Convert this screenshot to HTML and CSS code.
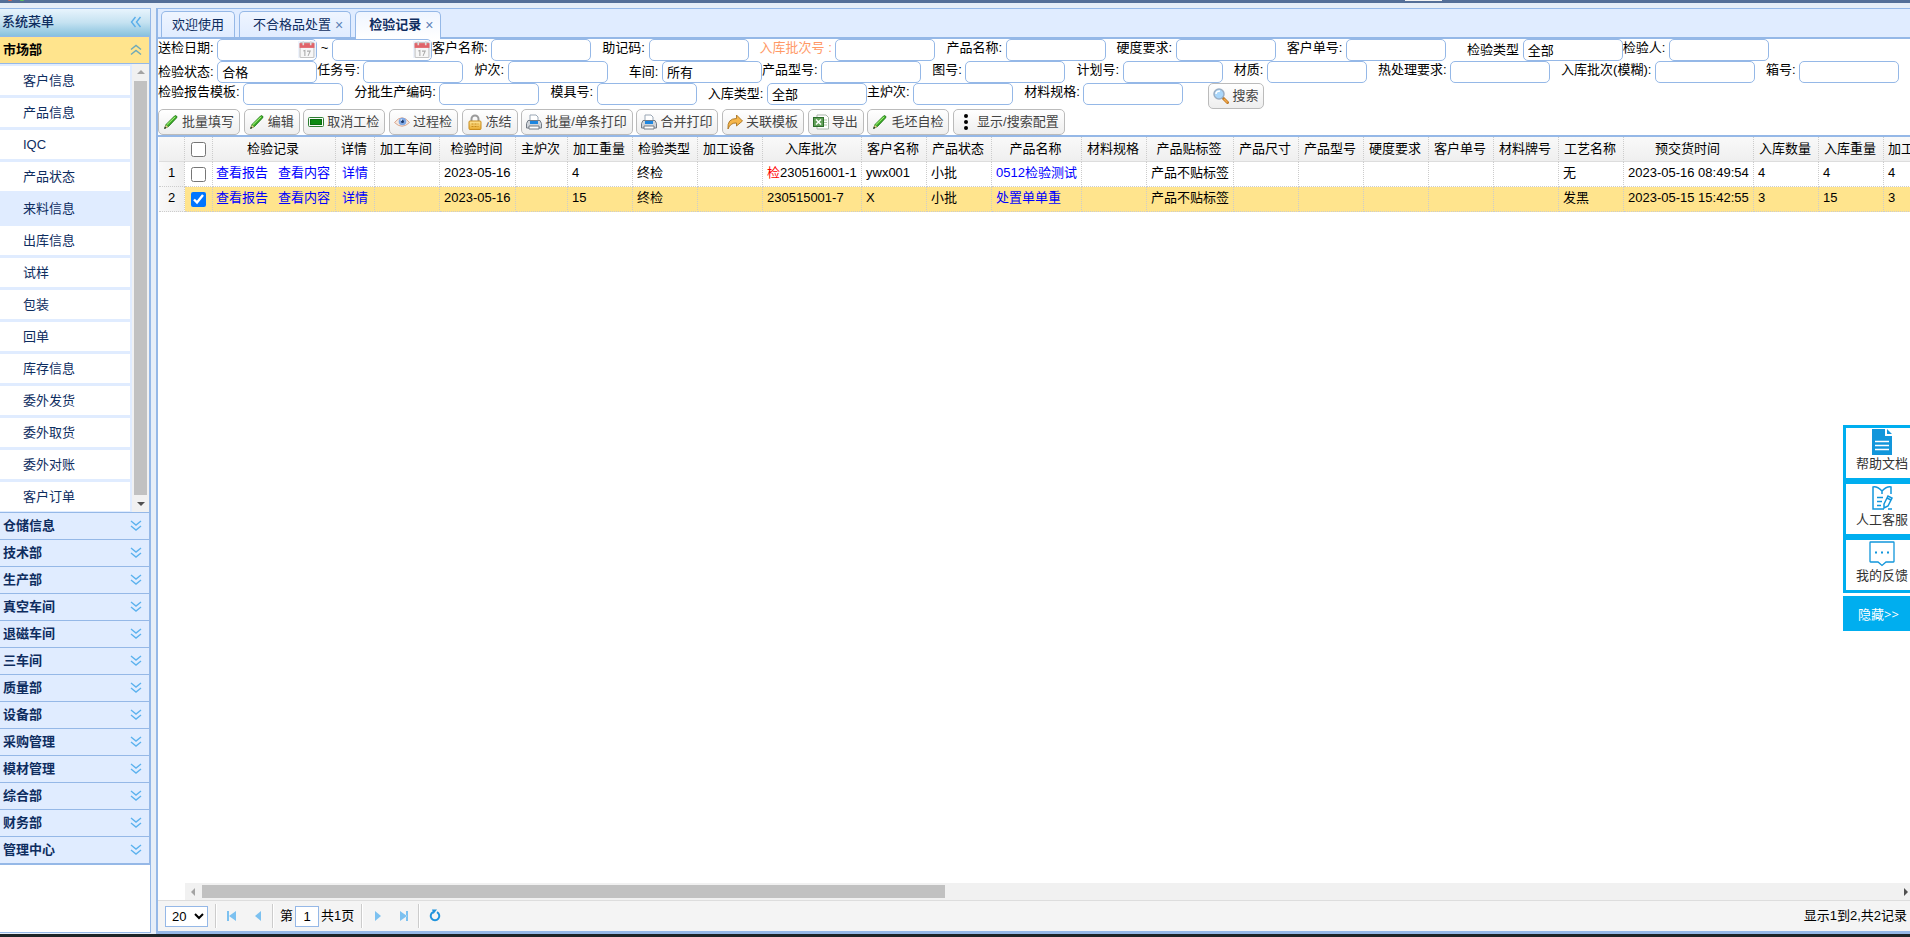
FILE: index.html
```
<!DOCTYPE html>
<html lang="zh-CN">
<head>
<meta charset="utf-8">
<title>检验记录</title>
<link rel="stylesheet" href="styles.css">
</head>
<body>
<svg class="defs" aria-hidden="true">
  <defs>
    <linearGradient id="g-pencil" x1="0" y1="0" x2="1" y2="1"><stop offset="0.3" stop-color="#7be34c"/><stop offset="0.7" stop-color="#14850f"/></linearGradient>
    <linearGradient id="g-gold" x1="0" y1="0" x2="0" y2="1"><stop offset="0" stop-color="#ffe79a"/><stop offset="1" stop-color="#e8a92c"/></linearGradient>
  </defs>
  <symbol id="pencil" viewBox="0 0 16 16"><path d="M1.500 14.500l1.500-4L11.500 2q1-1 2 0t0 2L5.500 12.500z" fill="url(#g-pencil)" stroke="#17700f" stroke-width="0.800"/><path d="M4 10.500L12 3" stroke="#a6f27f"/><path d="M1.500 14.500l1.400-3.600 2.200 2.200z" fill="#e8cf8f"/><path d="M1.300 14.700l.7-2.200 1.500 1.500z" fill="#222"/></symbol>
  <symbol id="card" viewBox="0 0 16 16"><rect x="0.500" y="3.500" width="15" height="9" rx="1" fill="#f4fbf4" stroke="#2e7d32"/><rect x="2.500" y="5.500" width="11" height="5" fill="#0c8a12" stroke="#0a6b10"/></symbol>
  <symbol id="eye" viewBox="0 0 16 16"><path d="M0.500 8.500Q8-1 15.500 8.500 8 16 .5 8.500z" fill="#f5e8df" stroke="#dba890"/><circle cx="8.500" cy="7.500" r="3.800" fill="#7fa8e4"/><circle cx="8.500" cy="7.500" r="1.500" fill="#1b376b"/><circle cx="7.300" cy="6" r="0.800" fill="#fff"/></symbol>
  <symbol id="lock" viewBox="0 0 16 16"><path d="M4.500 8V5a3.500 3.500 0 017 0v3" fill="none" stroke="#999" stroke-width="2"/><rect x="2" y="7" width="12" height="8.500" rx="1" fill="url(#g-gold)" stroke="#c98c1c"/><path d="M4.500 10h7M4.500 12.500h7" stroke="#c98c1c" stroke-dasharray="2 1"/></symbol>
  <symbol id="printer" viewBox="0 0 16 16"><path d="M4 7V1h6l2 2v4z" fill="#fff" stroke="#9aa7b5"/><path d="M2 6.500h12l1.500 3V14H.5V9.500z" fill="#cfd4da" stroke="#747c86"/><path d="M4 7h8v3H4z" fill="#1d86e0"/><path d="M3 12h10v3H3z" fill="#fff" stroke="#747c86"/></symbol>
  <symbol id="arrow" viewBox="0 0 16 16"><path d="M1 15Q0 4.500 9.500 4.500V1L15.500 7l-6 5V9Q3.500 8.500 1 15z" fill="#f6b64a" stroke="#a87422" stroke-width="0.900"/></symbol>
  <symbol id="excel" viewBox="0 0 16 16"><path d="M4 1h9l2.500 2.500V15H4z" fill="#fff" stroke="#a9b5a9"/><path d="M11 6h3M11 8.500h3M11 11h3" stroke="#a9c7a4"/><rect x="0.500" y="3.500" width="10" height="9" fill="#5f9f57" stroke="#2d6d2a"/><path d="M3 5.500l5 5M8 5.500l-5 5" stroke="#fff" stroke-width="1.500"/></symbol>
  <symbol id="dots" viewBox="0 0 16 16"><circle cx="8" cy="2" r="2"/><circle cx="8" cy="8" r="2"/><circle cx="8" cy="14" r="2"/></symbol>
  <symbol id="search" viewBox="0 0 16 16"><path d="M9.500 9.500l5 5" stroke="#c07a25" stroke-width="3" stroke-linecap="round"/><path d="M11 11l3.500 3.500" stroke="#f3a94c" stroke-width="1.500"/><circle cx="6" cy="6" r="5" fill="#a9d6fa" stroke="#9aaec4" stroke-width="1.500"/><path d="M3 6q0-3 4-3" stroke="#fff" stroke-width="1.500" fill="none"/></symbol>
  <symbol id="calendar" viewBox="0 0 16 16"><rect x="1.500" y="1.500" width="13" height="14" rx="1" fill="#f7f7f7" stroke="#c4c4c4"/><path d="M1 2h14v4.500H1z" fill="#e0646a"/><path d="M4.500 0v4M11.500 0v4" stroke="#ddd" stroke-width="1.500"/><path d="M4.500 9.500l1.500-.5v5M8 9.500h3l-2 4.500" stroke="#aaa" fill="none"/></symbol>
  <symbol id="chev-down" viewBox="0 0 12 12"><path d="M1 1l5 4 5-4M1 6l5 4 5-4" fill="none" stroke="#5cb2ee" stroke-width="1.400"/></symbol>
  <symbol id="chev-up" viewBox="0 0 12 12"><path d="M1 5.500l5-4 5 4M1 10.500l5-4 5 4" fill="none" stroke="#6fa9b8" stroke-width="1.400"/></symbol>
  <symbol id="chev-left" viewBox="0 0 12 12"><path d="M5.500 1L1.500 6l4 5M10.500 1L6.500 6l4 5" fill="none" stroke="#5aaeea" stroke-width="1.400"/></symbol>
</svg>
<div class="topbar"><i class="speck red"></i><i class="speck green"></i><i class="topchip"></i></div>
<div class="workspace">
  <aside class="sidebar">
    <div class="side-title"><span>系统菜单</span><svg class="chev"><use href="#chev-left"/></svg></div>
    <nav class="accordion">
      <button class="group open"><span>市场部</span><svg class="chev"><use href="#chev-up"/></svg></button>
      <div class="menu-wrap">
        <div class="menu">
          <a href="#">客户信息</a><a href="#">产品信息</a><a href="#">IQC</a><a href="#">产品状态</a><a href="#" class="hover">来料信息</a><a href="#">出库信息</a><a href="#">试样</a><a href="#">包装</a><a href="#">回单</a><a href="#">库存信息</a><a href="#">委外发货</a><a href="#">委外取货</a><a href="#">委外对账</a><a href="#">客户订单</a>
        </div>
        <div class="vscroll"><i class="tri up"></i><i class="vthumb"></i><i class="tri down"></i></div>
      </div>
      <button class="group"><span>仓储信息</span><svg class="chev"><use href="#chev-down"/></svg></button>
      <button class="group"><span>技术部</span><svg class="chev"><use href="#chev-down"/></svg></button>
      <button class="group"><span>生产部</span><svg class="chev"><use href="#chev-down"/></svg></button>
      <button class="group"><span>真空车间</span><svg class="chev"><use href="#chev-down"/></svg></button>
      <button class="group"><span>退磁车间</span><svg class="chev"><use href="#chev-down"/></svg></button>
      <button class="group"><span>三车间</span><svg class="chev"><use href="#chev-down"/></svg></button>
      <button class="group"><span>质量部</span><svg class="chev"><use href="#chev-down"/></svg></button>
      <button class="group"><span>设备部</span><svg class="chev"><use href="#chev-down"/></svg></button>
      <button class="group"><span>采购管理</span><svg class="chev"><use href="#chev-down"/></svg></button>
      <button class="group"><span>模材管理</span><svg class="chev"><use href="#chev-down"/></svg></button>
      <button class="group"><span>综合部</span><svg class="chev"><use href="#chev-down"/></svg></button>
      <button class="group"><span>财务部</span><svg class="chev"><use href="#chev-down"/></svg></button>
      <button class="group"><span>管理中心</span><svg class="chev"><use href="#chev-down"/></svg></button>
    </nav>
  </aside>
  <main class="main">
    <div class="tabs">
      <button class="tab">欢迎使用</button>
      <button class="tab closable">不合格品处置<span class="close">×</span></button>
      <button class="tab closable active">检验记录<span class="close">×</span></button>
    </div>
    <form class="search-form">
      <div class="row">
        <label class="tight">送检日期: <span class="date"><input type="text"><svg><use href="#calendar"/></svg></span></label>
        <label class="tight"> ~ <span class="date"><input type="text"><svg><use href="#calendar"/></svg></span></label>
        <label class="tight">客户名称: <input type="text"></label>
        <label>助记码: <input type="text"></label>
        <label class="accent">入库批次号 : <input type="text"></label>
        <label>产品名称: <input type="text"></label>
        <label>硬度要求: <input type="text"></label>
        <label>客户单号: <input type="text"></label>
        <label class="combo wide">检验类型 <select><option>全部</option></select></label>
        <label class="tight">检验人: <input type="text"></label>
      </div>
      <div class="row">
        <label class="combo tight">检验状态: <select><option>合格</option></select></label>
        <label class="tight">任务号: <input type="text"></label>
        <label>炉次: <input type="text"></label>
        <label class="combo wide">车间: <select><option>所有</option></select></label>
        <label class="tight">产品型号: <input type="text"></label>
        <label>图号: <input type="text"></label>
        <label>计划号: <input type="text"></label>
        <label>材质: <input type="text"></label>
        <label>热处理要求: <input type="text"></label>
        <label>入库批次(模糊): <input type="text"></label>
        <label>箱号: <input type="text"></label>
      </div>
      <div class="row last">
        <label class="tight">检验报告模板: <input type="text"></label>
        <label>分批生产编码: <input type="text"></label>
        <label>模具号: <input type="text"></label>
        <label class="combo">入库类型: <select><option>全部</option></select></label>
        <label class="tight">主炉次: <input type="text"></label>
        <label>材料规格: <input type="text"></label>
        <button type="button" class="btn find"><svg><use href="#search"/></svg>搜索</button>
      </div>
    </form>
    <div class="toolbar">
      <button class="btn"><svg><use href="#pencil"/></svg>批量填写</button>
      <button class="btn"><svg><use href="#pencil"/></svg>编辑</button>
      <button class="btn"><svg><use href="#card"/></svg>取消工检</button>
      <button class="btn"><svg><use href="#eye"/></svg>过程检</button>
      <button class="btn"><svg><use href="#lock"/></svg>冻结</button>
      <button class="btn"><svg><use href="#printer"/></svg>批量/单条打印</button>
      <button class="btn"><svg><use href="#printer"/></svg>合并打印</button>
      <button class="btn"><svg><use href="#arrow"/></svg>关联模板</button>
      <button class="btn"><svg><use href="#excel"/></svg>导出</button>
      <button class="btn"><svg><use href="#pencil"/></svg>毛坯自检</button>
      <button class="btn"><svg><use href="#dots"/></svg>显示/搜索配置</button>
    </div>
    <div class="grid">
      <table>
        <colgroup><col class="w26"><col class="w28"><col class="w123"><col class="w39"><col class="w65"><col class="w76"><col class="w52"><col class="w65" span="3"><col class="w99"><col class="w65" span="2"><col class="w90"><col class="w65"><col class="w87"><col class="w65" span="6"><col class="w130"><col class="w65" span="3"></colgroup>
        <thead><tr><th></th><th class="ck"><input type="checkbox" aria-label="全选"></th><th>检验记录</th><th>详情</th><th>加工车间</th><th>检验时间</th><th>主炉次</th><th>加工重量</th><th>检验类型</th><th>加工设备</th><th>入库批次</th><th>客户名称</th><th>产品状态</th><th>产品名称</th><th>材料规格</th><th>产品贴标签</th><th>产品尺寸</th><th>产品型号</th><th>硬度要求</th><th>客户单号</th><th>材料牌号</th><th>工艺名称</th><th>预交货时间</th><th>入库数量</th><th>入库重量</th><th class="cut">加工</th></tr></thead>
        <tbody>
          <tr><td class="num">1</td><td class="ck"><input type="checkbox" aria-label="第1行"></td><td class="links"><a href="#">查看报告</a><a href="#">查看内容</a></td><td class="mid"><a href="#">详情</a></td><td></td><td>2023-05-16</td><td></td><td>4</td><td>终检</td><td></td><td><span class="flag">检</span>230516001-1</td><td>ywx001</td><td>小批</td><td><a href="#">0512检验测试</a></td><td></td><td>产品不贴标签</td><td></td><td></td><td></td><td></td><td></td><td>无</td><td>2023-05-16 08:49:54</td><td>4</td><td>4</td><td>4</td></tr>
          <tr class="selected"><td class="num">2</td><td class="ck"><input type="checkbox" checked aria-label="第2行"></td><td class="links"><a href="#">查看报告</a><a href="#">查看内容</a></td><td class="mid"><a href="#">详情</a></td><td></td><td>2023-05-16</td><td></td><td>15</td><td>终检</td><td></td><td>230515001-7</td><td>X</td><td>小批</td><td><a href="#">处置单单重</a></td><td></td><td>产品不贴标签</td><td></td><td></td><td></td><td></td><td></td><td>发黑</td><td>2023-05-15 15:42:55</td><td>3</td><td>15</td><td>3</td></tr>
        </tbody>
      </table>
    </div>
    <div class="hscroll"><i class="tri left"></i><i class="hthumb"></i><i class="tri right"></i></div>
    <div class="pager">
      <select class="size" aria-label="每页条数"><option>20</option></select>
      <i class="sep"></i>
      <button class="pg" aria-label="首页"><svg viewBox="0 0 16 16"><path d="M3 3h2v10H3zM12 3v10L5 8z"/></svg></button>
      <button class="pg" aria-label="上一页"><svg viewBox="0 0 16 16"><path d="M11 3v10L5 8z"/></svg></button>
      <i class="sep"></i>
      <label class="page">第<input type="text" value="1"></label><span class="total">共1页</span>
      <i class="sep"></i>
      <button class="pg" aria-label="下一页"><svg viewBox="0 0 16 16"><path d="M5 3v10l6-5z"/></svg></button>
      <button class="pg" aria-label="末页"><svg viewBox="0 0 16 16"><path d="M4 3v10l7-5zM10 3h2v10h-2z"/></svg></button>
      <i class="sep"></i>
      <button class="pg" aria-label="刷新"><svg viewBox="0 0 16 16"><path d="M10 4.200A4.300 4.300 0 116 4.200" fill="none" stroke="#1f93dc" stroke-width="2"/><path d="M5 1.500h5L6.500 6z" fill="#1f93dc"/></svg></button>
      <span class="info">显示1到2,共2记录</span>
    </div>
  </main>
</div>
<div class="taskbar"></div>
<div class="float">
  <a href="#"><svg viewBox="0 0 26 26"><path d="M3 0h13v7h7v19H3zM18 0l5 5h-5z" fill="#1296db"/><path d="M6 12.500h14M6 16.500h14M6 20.500h14" stroke="#fff" stroke-width="1.600"/></svg>帮助文档</a>
  <a href="#"><svg viewBox="0 0 26 26" fill="none" stroke="#1296db" stroke-width="1.500"><path d="M13 6Q8 1 4 2v22h11M13 6q5-5 9-4v7M13 6v3M8 12.500h6M8 16.500h5M8 20.500h4M19 24h4"/><path d="M15 19l4-8 4 2-4 8-4 2zM18 13l4 2"/></svg>人工客服</a>
  <a href="#"><svg viewBox="0 0 26 26" fill="none" stroke="#1296db" stroke-width="1.300"><path d="M1.500 1h23q.5 0 .5.500v19q0 .5-.5.500H17l-4 3.500L9 21H1.500q-.5 0-.5-.5v-19Q1 1 1.500 1z"/><path d="M6 11.500h2M12 11.500h2M18 11.500h2" stroke-width="2"/></svg>我的反馈</a>
  <button class="hide">隐藏&gt;&gt;</button>
</div>
</body>
</html>
```
FILE: styles.css
```
* { box-sizing: border-box; }
html, body { height: 100%; }
body {
  margin: 0;
  display: flex;
  flex-direction: column;
  overflow: hidden;
  background: #e6eef8;
  color: #000;
  font: 13px/18px "Liberation Sans", "Noto Sans CJK SC", sans-serif;
}
button, input, select { font: inherit; color: inherit; margin: 0; }
button { cursor: pointer; }
a { text-decoration: none; color: #00f; }
.defs { position: absolute; width: 0; height: 0; }

.topbar { flex: none; height: 3px; background: #546f98; display: flex; }
.speck { width: 4px; height: 1px; margin-left: 8px; background: #d5604f; border-radius: 0 0 2px 2px; }
.speck.green { background: #5cc05c; }
.topchip { width: 37px; height: 1px; background: #f2f2f2; margin-left: auto; margin-right: 468px; }
.taskbar { flex: none; height: 3px; background: #1c2427; }

.workspace { flex: 1; min-height: 0; display: flex; gap: 5px; padding-top: 5px; }

.sidebar { width: 151px; flex: none; display: flex; flex-direction: column; background: #fff; border: solid #95b8e7; border-width: 1px 1px 1px 0; margin-bottom: 1px; }
.side-title { height: 28px; flex: none; display: flex; align-items: center; justify-content: space-between; padding: 0 8px 1px 2px; color: #0e2d5f; font-weight: 500; background: linear-gradient(#e8f4fd, #c5e2f1 50%, #87c2de); border-bottom: 1px solid #95b8e7; }
.chev { width: 12px; height: 12px; flex: none; }
.accordion { border-right: 1px solid #95b8e7; border-bottom: 1px solid #95b8e7; display: flex; flex-direction: column; }
.group { height: 27px; display: flex; align-items: center; justify-content: space-between; padding: 0 7px 0 3px; border: 0; border-bottom: 1px solid #95b8e7; background: #e0ecff; color: #0e2d5f; font-weight: 700; text-align: left; }
.group.open { background: #ffe48d; color: #000; }
.menu-wrap { display: flex; background: #e0ecff; border-bottom: 1px solid #95b8e7; }
.menu { flex: 1; display: flex; flex-direction: column; gap: 3px; padding: 2px 2px 1px 0; }
.menu a { height: 29px; line-height: 30px; padding-left: 23px; background: #fff; color: #0e2d5f; }
.menu a.hover { background: #e0ecff; }
.vscroll { width: 17px; background: #f1f1f1; display: flex; flex-direction: column; align-items: center; justify-content: space-between; padding: 6px 0; }
.vthumb { width: 13px; flex: 1; margin: 7px 0; background: #c1c1c1; }
.tri { width: 0; height: 0; flex: none; border: 4px solid transparent; }
.tri.up { border-top: 0; border-bottom-color: #a3a3a3; }
.tri.down { border-bottom: 0; border-top-color: #505050; }
.tri.left { border-left: 0; border-right-color: #a3a3a3; }
.tri.right { border-right: 0; border-left-color: #505050; }

.main { flex: 1; min-width: 0; display: flex; flex-direction: column; background: #fff; border: solid #95b8e7; border-width: 1px 0 3px 2px; }
.tabs { flex: none; display: flex; align-items: flex-end; gap: 4px; height: 30px; padding: 0 3px; background: #e0ecff; border-bottom: 2px solid #95b8e7; }
.tab { height: 26px; display: flex; align-items: center; gap: 4px; padding: 1px 10px 0; border: 1px solid #95b8e7; border-bottom: 0; border-radius: 5px 5px 0 0; background: linear-gradient(#eff5ff, #e0ecff); color: #0e2d5f; }
.tab.closable { padding: 1px 7px 0 13px; }
.tab.active { height: 28px; margin-bottom: -2px; padding-bottom: 2px; background: linear-gradient(#eff5ff, #fff); font-weight: 700; }
.close { font-size: 14px; font-weight: 400; color: #5b7fb5; }

.row { display: flex; height: 22px; white-space: pre; }
.row.last { height: 26px; }
.row label { display: flex; line-height: 18px; margin-left: 11px; }
.row label.tight { margin-left: 0; }
.row label.wide { margin-left: 21px; }
.row label.combo { line-height: 22px; }
.accent { color: #ff9966; }
.row input, .row select { width: 100px; height: 22px; padding: 0 4px; border: 1px solid #95b8e7; border-radius: 5px; background: #fff; appearance: none; color: #000; outline: 0; }
.date { position: relative; display: flex; }
.date svg { position: absolute; right: 1px; top: 2px; width: 18px; height: 17px; background: #eef3fc; }

.toolbar { flex: none; height: 26px; white-space: nowrap; overflow: hidden; }
.btn { display: inline-flex; align-items: center; gap: 3px; height: 26px; padding: 0 5px 1px 4px; vertical-align: top; border: 1px solid #bbb; border-radius: 5px; background: linear-gradient(#fff, #eee); color: #444; white-space: nowrap; }
.btn svg { width: 16px; height: 16px; flex: none; }
.find { margin-left: 25px; }

.grid { flex: 1; min-height: 0; overflow: hidden; border-top: 2px solid #95b8e7; }
table { table-layout: fixed; width: 1790px; border-collapse: separate; border-spacing: 0; margin-left: 1px; }
.w26 { width: 26px; } .w28 { width: 28px; } .w39 { width: 39px; } .w52 { width: 52px; } .w65 { width: 65px; }
.w76 { width: 76px; } .w87 { width: 87px; } .w90 { width: 90px; } .w99 { width: 99px; } .w123 { width: 123px; } .w130 { width: 130px; }
th, td { height: 25px; padding: 0 4px 2px; white-space: nowrap; overflow: hidden; font-weight: 400; text-align: left; border-right: 1px dotted #ccc; border-bottom: 1px dotted #ccc; }
th { padding: 0 2px 1px 0; text-align: center; background: linear-gradient(#f9f9f9, #efefef); border-bottom: 1px solid #ddd; }
th.cut { text-align: left; padding-left: 4px; }
.selected td { background: #ffe48d; }
td.num, .selected td.num { padding: 0 0 2px; text-align: center; background: linear-gradient(90deg, #f9f9f9, #efefef); }
td.mid { text-align: center; padding: 0 0 2px; }
th.ck, td.ck { padding: 0; text-align: center; }
.ck input { display: block; width: 15px; height: 15px; margin: 1px auto 0; }
td.links { padding-left: 3px; }
.links a + a { margin-left: 10px; }
.flag { color: #f00; }

.hscroll { flex: none; height: 17px; margin-left: 27px; background: #f1f1f1; display: flex; align-items: center; padding: 0 2px 0 6px; }
.hthumb { width: 43.3%; height: 13px; margin: 0 auto 0 7px; background: #c1c1c1; }

.pager { flex: none; height: 31px; display: flex; align-items: center; padding: 0 3px 0 7px; background: #f4f4f4; border-top: 1px solid #ddd; }
.size { width: 43px; height: 21px; margin-right: 6px; padding: 0 2px; border: 1px solid #95b8e7; background: #fff; }
.sep { width: 2px; height: 24px; margin: 0 2px 0 1px; background: linear-gradient(90deg, #ccc 50%, #fff 50%); }
.pg { width: 26px; height: 26px; padding: 5px; border: 0; background: none; }
.pg svg { display: block; width: 16px; height: 16px; fill: #7cc1f0; }
.page { display: flex; align-items: center; gap: 2px; margin-left: 4px; }
.page input { width: 24px; height: 21px; padding: 0; text-align: center; border: 1px solid #95b8e7; background: #fff; }
.total { margin: 0 6px 0 2px; }
.info { margin-left: auto; }

.float { position: fixed; right: 0; top: 425px; width: 67px; display: flex; flex-direction: column; background: #fff; color: #333; }
.float a { height: 56px; display: flex; flex-direction: column; align-items: center; padding: 1px 2px 0 10px; background: #fff; border: solid #00aeef; border-width: 3px 0 3px 3px; color: #333; line-height: 18px; }
.float svg { width: 26px; height: 26px; flex: none; }
.hide { height: 35px; margin-top: 3px; padding: 0 6px 0 10px; border: 0; background: #00aeef; color: #fff; font-family: "Noto Sans", "Noto Sans CJK SC", sans-serif; }
```
